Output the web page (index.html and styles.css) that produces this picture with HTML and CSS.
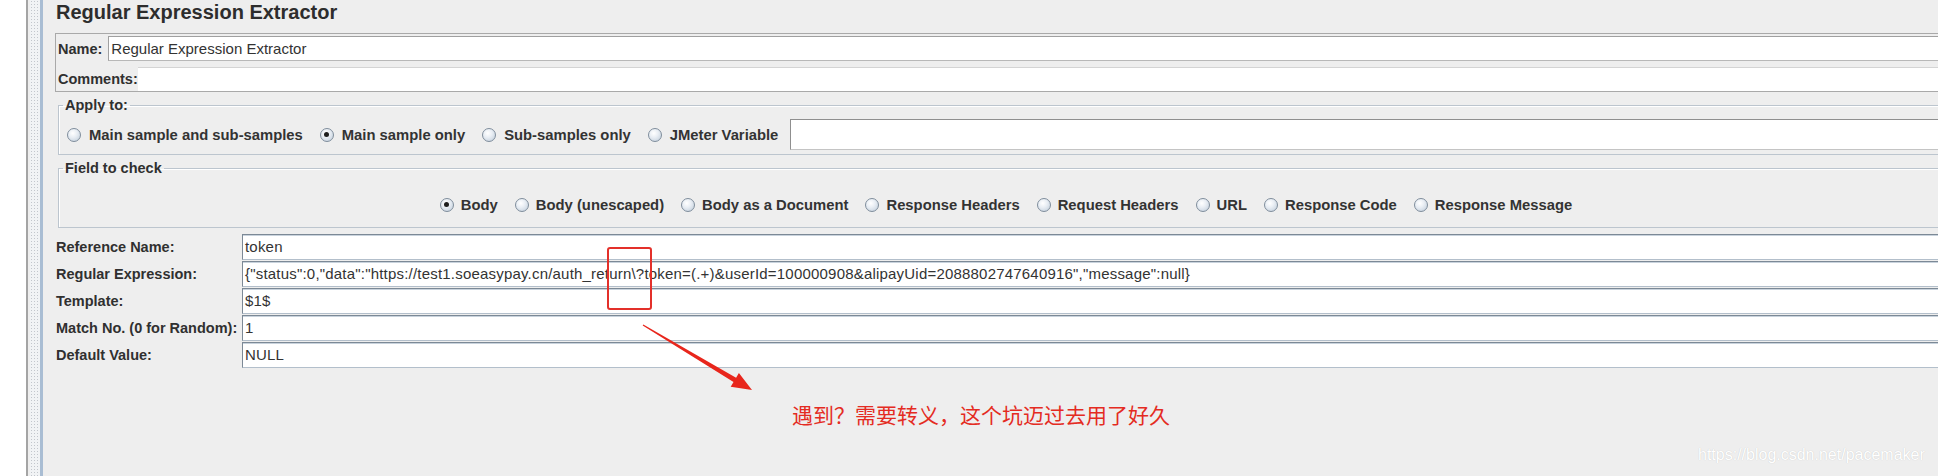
FILE: index.html
```html
<!DOCTYPE html>
<html lang="en">
<head>
<meta charset="utf-8">
<title>Regular Expression Extractor</title>
<link rel="stylesheet" href="styles.css">
</head>
<body>
<div class="app">
  <div class="tree"></div>
  <div class="divider"></div>
  <main class="content">
    <h1 class="title">Regular Expression Extractor</h1>
    <div class="name-panel">
      <div class="name-row">
        <span class="lbl">Name:</span>
        <div class="field name-field">Regular Expression Extractor</div>
      </div>
      <div class="comments-row">
        <span class="lbl">Comments:</span>
        <div class="field comments-field"></div>
      </div>
    </div>
    <fieldset class="group apply">
      <legend>Apply to:</legend>
      <div class="radios apply-radios">
        <span class="radio-item"><span class="radio"></span>Main sample and sub-samples</span>
        <span class="radio-item"><span class="radio on"></span>Main sample only</span>
        <span class="radio-item"><span class="radio"></span>Sub-samples only</span>
        <span class="radio-item"><span class="radio"></span>JMeter Variable</span>
        <div class="field var-field"></div>
      </div>
    </fieldset>
    <fieldset class="group check">
      <legend>Field to check</legend>
      <div class="radios check-radios">
        <span class="radio-item"><span class="radio on"></span>Body</span>
        <span class="radio-item"><span class="radio"></span>Body (unescaped)</span>
        <span class="radio-item"><span class="radio"></span>Body as a Document</span>
        <span class="radio-item"><span class="radio"></span>Response Headers</span>
        <span class="radio-item"><span class="radio"></span>Request Headers</span>
        <span class="radio-item"><span class="radio"></span>URL</span>
        <span class="radio-item"><span class="radio"></span>Response Code</span>
        <span class="radio-item"><span class="radio"></span>Response Message</span>
      </div>
    </fieldset>
    <div class="form">
      <span class="lbl">Reference Name:</span>
      <div class="field row-field">token</div>
      <span class="lbl">Regular Expression:</span>
      <div class="field row-field">{"status":0,"data":"https://test1.soeasypay.cn/auth_return\?token=(.+)&amp;userId=100000908&amp;alipayUid=2088802747640916","message":null}</div>
      <span class="lbl">Template:</span>
      <div class="field row-field">$1$</div>
      <span class="lbl">Match No. (0 for Random):</span>
      <div class="field row-field">1</div>
      <span class="lbl">Default Value:</span>
      <div class="field row-field">NULL</div>
    </div>
  </main>
  <div class="red-box"></div>
  <svg class="arrow" width="124" height="78" viewBox="0 0 124 78">
    <polygon points="7.31,6.49 100.08,59.65 102.9,54.9 116,72 94.7,68.7 97.52,63.95 6.69,7.51" fill="#e8261c"/>
  </svg>
  <div class="note">遇到？需要转义，这个坑迈过去用了好久</div>
  <div class="watermark">https://blog.csdn.net/pacemaker</div>
</div>
</body>
</html>
```
FILE: styles.css
```css
html, body {
  margin: 0;
  padding: 0;
  overflow: hidden;
  background: #eeeeee;
}
body {
  font-family: "Liberation Sans", Arial, sans-serif;
  color: #333;
}
.app {
  position: relative;
  display: flex;
  width: 1938px;
  height: 476px;
  overflow: hidden;
  background: #eeeeee;
}
.tree {
  flex: 0 0 26px;
  background: #ffffff;
}
.divider {
  flex: 0 0 17px;
  box-sizing: border-box;
  border-left: 2px solid #a4a4a4;
  border-right: 3px solid #a9bdd3;
  background-color: #f1f3f5;
  background-image: radial-gradient(circle, #c2c6cc 0.8px, transparent 1px);
  background-size: 3px 3px;
  background-position: 2px 0;
  background-clip: content-box;
  padding-left: 2px;
}
.content {
  flex: 0 0 1920px;
  display: flex;
  flex-direction: column;
}
.title {
  margin: 0;
  height: 33px;
  padding-left: 13px;
  font-size: 20px;
  line-height: 24px;
  font-weight: bold;
  color: #2d2d2d;
}
.lbl {
  font-weight: bold;
  font-size: 14.5px;
  color: #303030;
  white-space: nowrap;
}
.field {
  box-sizing: border-box;
  background: #ffffff;
  font-size: 15px;
  color: #333;
  white-space: nowrap;
  overflow: hidden;
  padding-left: 2px;
}
.name-panel {
  margin-left: 12px;
  border: 1px solid #a9a9a9;
  border-right: none;
  padding: 2px 0 0 2px;
}
.name-row {
  display: flex;
  align-items: center;
  height: 25px;
}
.name-field {
  flex: 1;
  height: 25px;
  line-height: 23px;
  margin-left: 6px;
  border: 1px solid #a0a0a0;
  border-right: none;
  border-bottom-color: #b8b8b8;
}
.comments-row {
  display: flex;
  align-items: center;
  height: 24px;
  margin-top: 6px;
}
.comments-field {
  flex: 1;
  height: 24px;
  border-top: 1px solid #d4d4d4;
}
.group {
  margin: 5px 0 0 15px;
  min-width: 0;
  border: 1px solid #bcc5ce;
  border-right: none;
  box-shadow: inset 1px 1px 0 #ffffff;
  padding: 0 0 0 4px;
}
.group legend {
  font-weight: bold;
  font-size: 14.5px;
  line-height: 16px;
  padding: 0 2px;
  color: #303030;
}
.radios {
  display: flex;
  align-items: center;
  font-weight: bold;
  font-size: 14.8px;
  color: #333;
  white-space: nowrap;
}
.apply-radios {
  margin: 6px 0 4px 4px;
  height: 31px;
  gap: 17px;
}
.apply-radios .radio {
  margin-right: 8px;
}
.check-radios {
  margin: 20px 14px 14px 0;
  height: 17px;
  justify-content: center;
  gap: 17px;
}
.check-radios .radio {
  margin-right: 7px;
}
.radio-item {
  display: flex;
  align-items: center;
}
.radio {
  position: relative;
  box-sizing: border-box;
  width: 14px;
  height: 14px;
  border-radius: 50%;
  border: 1px solid #7f8d9c;
  background: radial-gradient(circle at 40% 35%, #ffffff 0%, #e9eef4 40%, #bccad8 100%);
}
.radio.on::after {
  content: "";
  position: absolute;
  left: 3.5px;
  top: 3.5px;
  width: 5px;
  height: 5px;
  border-radius: 50%;
  background: #1e1e1e;
}
.var-field {
  flex: 1;
  height: 31px;
  margin-left: -5px;
  border: 1px solid #8f8f8f;
  border-right: none;
  border-bottom-color: #c4c4c4;
}
.form {
  margin: 6px 0 0 13px;
  display: grid;
  grid-template-columns: 186px 1fr;
  grid-auto-rows: 26px;
  row-gap: 1px;
  align-items: center;
}
.row-field {
  height: 26px;
  line-height: 23px;
  letter-spacing: 0.2px;
  border-top: 1px solid #7c8996;
  border-left: 1px solid #7c8996;
  border-bottom: 1px solid #b3bfcb;
  box-shadow: inset 0 1px 0 #c9d3dd;
}
.red-box {
  position: absolute;
  left: 607px;
  top: 247px;
  width: 45px;
  height: 63px;
  box-sizing: border-box;
  border: 2px solid #e3302a;
  border-radius: 3px;
}
.arrow {
  position: absolute;
  left: 636px;
  top: 318px;
}
.note {
  position: absolute;
  left: 792px;
  top: 403px;
  font-family: "Noto Sans CJK SC", "Noto Sans", sans-serif;
  font-size: 21px;
  line-height: 22px;
  color: #e42b22;
  white-space: nowrap;
}
.watermark {
  position: absolute;
  left: 1698px;
  top: 445px;
  font-family: "Liberation Sans", Arial, sans-serif;
  font-size: 16px;
  line-height: 20px;
  color: #ffffff;
  text-shadow: 0 0 1px rgba(0, 0, 0, 0.2);
  white-space: nowrap;
}
```
